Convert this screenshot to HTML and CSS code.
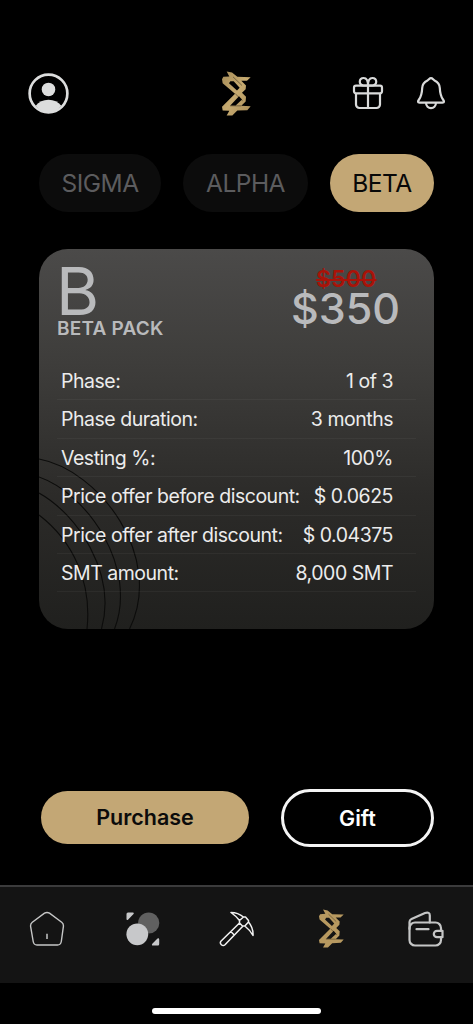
FILE: index.html
```html
<!DOCTYPE html>
<html lang="en">
<head>
<meta charset="utf-8">
<title>Beta Pack</title>
<link rel="stylesheet" href="styles.css">
</head>
<body>
<svg width="0" height="0" class="defs">
  <defs>
    <linearGradient id="gold" x1="0" y1="0" x2="1" y2="1"><stop offset="0" stop-color="#a58b57"/><stop offset=".5" stop-color="#c6aa70"/><stop offset="1" stop-color="#a88c57"/></linearGradient>
    <symbol id="logo" viewBox="66 33 87 134">
      <path fill-rule="evenodd" d="M80 34L96 37 112 50 152 51 141 62 124 62 138 76 137 87 126 98 138 110 137 124 124 137 152 138 142 150 112 151 97 166 80 166 88 152 68 151 66 140 105 101 68 69 66 57 70 50 88 49ZM91 63L87 69 111 91 119 83 101 63ZM117 108L91 136 107 136 126 118Z"/>
      <path class="logo-seam" d="M99 50L126 76M106 101L128 122M90 137H124"/>
    </symbol>
  </defs>
</svg>
<div class="app">
  <header class="header">
    <svg class="avatar" viewBox="0 0 40 40"><circle cx="20" cy="20" r="18.4" fill="none" stroke="#dcdddd" stroke-width="2.6"/><circle cx="20" cy="16" r="6.6" fill="#dcdddd"/><path fill="#dcdddd" d="M7.5 32Q12 26 20 26T32.500 32Q27 38.500 20 38.500T7.500 32Z"/></svg>
    <svg class="brand" fill="url(#gold)"><use href="#logo"/></svg>
    <svg class="gift-icon" viewBox="0 0 32 34"><g class="line"><rect x="2" y="9.700" width="28" height="7.600" rx="2"/><path d="M4 17.300V28.500a3.500 3.500 0 0 0 3.500 3.500H24.500a3.500 3.500 0 0 0 3.500-3.500V17.300M16 9.700V32M16 9.500H11.500C6.500 9.500 6.500 2 11.700 2 14.500 2 16 4.200 16 9.500ZM16 9.500H20.500C25.500 9.500 25.500 2 20.300 2 17.500 2 16 4.200 16 9.500Z"/></g></svg>
    <svg class="bell-icon" viewBox="0 0 30 34"><g class="line"><path d="M15 2.200C13.300 2.200 13 3.700 11.500 4.400 8 6 6.300 8.500 6.200 12C6 17 5.500 20 3 23.500 1.500 25.600 1.700 26.600 3.500 26.600H26.500C28.300 26.600 28.500 25.600 27 23.500 24.500 20 24 17 23.800 12 23.700 8.500 22 6 18.500 4.400 17 3.700 16.700 2.200 15 2.200ZM10 26.600C10 34 20 34 20 26.600"/></g></svg>
  </header>
  <nav class="tabs">
    <span class="tab sigma">SIGMA</span><span class="tab alpha">ALPHA</span><span class="tab active">BETA</span>
  </nav>
  <main class="card">
    <svg class="rings" viewBox="0 0 102 172"><path d="M0 2C60 13 126 100 90.500 172M0 20C49 37 99 111 75.500 172M0 36C38 57 78 116 62.500 172M0 58C34 84 53 125 48 172"/></svg>
    <div class="card-head">
      <div class="pack"><span class="letter">B</span><span class="name">BETA PACK</span></div>
      <div class="price"><span class="old">$500</span><span class="new">$350</span></div>
    </div>
    <div class="rows">
      <div class="row"><span>Phase:</span><span>1 of 3</span></div>
      <div class="row"><span>Phase duration:</span><span>3 months</span></div>
      <div class="row"><span>Vesting %:</span><span>100%</span></div>
      <div class="row"><span>Price offer before discount:</span><span>$ 0.0625</span></div>
      <div class="row"><span>Price offer after discount:</span><span>$ 0.04375</span></div>
      <div class="row"><span>SMT amount:</span><span>8,000 SMT</span></div>
    </div>
  </main>
  <div class="actions"><button class="purchase">Purchase</button><button class="gift">Gift</button></div>
  <footer class="bottom">
    <svg class="home" viewBox="0 0 36 36"><path fill="none" stroke="#c5c6c6" stroke-width="1.400" d="M15.500 2.200Q18 .8 20.500 2.200L32.700 11.300Q34.700 12.900 34.400 15.300L32.300 30.500Q31.700 34 28.500 34H8Q4.800 34 4.200 30.500L1.600 15.300Q1.300 12.900 3.300 11.300Z"/><path stroke="#c5c6c6" stroke-width="1.500" d="M18 22.800V28"/></svg>
    <svg class="circles" viewBox="0 0 34 34"><circle cx="22.700" cy="11" r="10.600" fill="#606060"/><circle cx="11.300" cy="22.300" r="10.900" fill="#c7c8ca"/><path fill="#c7c8ca" d="M2 .5H7Q8.500.5 7.500 2L2 7.700Q.5 8.500.5 7V2Q.5.5 2 .5ZM32 33.500H27Q25 33.500 26.500 31.500L31.500 26.500Q33.200 25.500 33.200 27.500V32Q33.200 33.500 32 33.500Z"/></svg>
    <svg class="pick" viewBox="0 0 36 36"><g fill="none" stroke="#f2f2f2" stroke-width="1.500" stroke-linejoin="round"><path d="M12 1.500Q19 1.500 24.500 6L20.500 9.500Q17 5 12 1.500ZM29.500 11Q34.500 17 34 24.500Q31 19 25.800 15ZM24.500 6L26.500 6 29.500 9.500 29.500 11 25.800 15H23.500L20.500 12V9.500ZM20.500 12L1.900 30.300C.2 32.500 3.500 36 6 33.800L23.800 15.200M12 20.800L15.300 24"/></g></svg>
    <svg class="brand-small"><use href="#logo"/></svg>
    <svg class="wallet" viewBox="0 0 36 36"><g fill="none" stroke="#c5c6c6" stroke-width="2.200" stroke-linejoin="round" stroke-linecap="round"><rect x="1.500" y="11.500" width="31.500" height="23" rx="5.500"/><path d="M1.500 18V11Q1.500 9 3.500 8L17 2Q21.800.5 21.800 4.500V11.500M8.500 18.200H20.500"/><path fill="#141414" d="M34.500 19.800H29A3.200 3.200 0 0 0 29 26.200H34.500Z"/></g></svg>
  </footer>
  <div class="home-area"><div class="indicator"></div></div>
</div>
</body>
</html>
```
FILE: styles.css
```css
* { box-sizing: border-box; }
body { margin: 0; background: #000; font-family: Inter, "Liberation Sans", sans-serif; }
svg { display: block; flex: none; }
.defs { position: absolute; }
.app { width: 473px; height: 1024px; display: flex; flex-direction: column; overflow: hidden; }
.header { height: 154px; padding: 71px 28px 0 28px; display: flex; align-items: flex-start; }
.avatar { width: 41px; height: 41px; margin-top: 2px; }
.brand { width: 29px; height: 45px; margin-left: 153px; }
.logo-seam { stroke: #14110b; stroke-width: 2; fill: none; opacity: .65; }
.gift-icon { width: 32px; height: 34px; margin: 5px 0 0 100.500px; }
.bell-icon { width: 30px; height: 34px; margin: 5px 0 0 32px; }
.line { fill: none; stroke: #d9dada; stroke-width: 2.2; stroke-linejoin: round; }
.tabs { display: flex; gap: 22px; padding-left: 39px; height: 58px; }
.tab { height: 58px; border-radius: 29px; background: #0c0c0c; color: #5c5c5e; font-size: 24.500px; line-height: 58px; text-align: center; letter-spacing: -.5px; }
.sigma { width: 122px; }
.alpha { width: 125px; }
.active { width: 104px; background: #c3a775; color: #080808; }
.card { position: relative; width: 395px; height: 380px; margin: 37px 0 0 39px; border-radius: 29px; overflow: hidden; background: linear-gradient(#4b4a49, #3e3d3b 30%, #2c2b29 65%, #20201e); }
.rings { position: absolute; left: 0; bottom: 0; width: 102px; height: 172px; fill: none; stroke: #0c0c0b; stroke-width: 1.100; }
.card-head { position: relative; height: 113px; display: flex; justify-content: space-between; padding: 0 34px 0 18px; color: #b9babc; }
.pack, .price { display: flex; flex-direction: column; }
.letter { font-size: 66px; line-height: 50px; font-weight: 400; margin-top: 17px; height: 52px; margin-left: -1px; }
.name { font-size: 19px; line-height: 22px; font-weight: 600; letter-spacing: .2px; }
.old { color: #a91309; font-size: 23px; line-height: 20px; font-weight: 600; text-decoration: line-through; margin-top: 20px; padding-left: 25px; letter-spacing: .2px; }
.new { font-size: 43px; line-height: 36px; font-weight: 500; margin-top: 1px; }
.rows { position: relative; padding: 0 18px; }
.row { height: 38.400px; padding: 0 23px 0 4px; border-bottom: 1px solid rgba(255,255,255,.045); display: flex; justify-content: space-between; color: #ececec; font-size: 19.500px; line-height: 39px; white-space: nowrap; letter-spacing: -.48px; }
.actions { margin: 160px 0 0 41px; display: flex; align-items: center; gap: 32px; height: 58px; }
.actions button { font: 600 21.500px/24px Inter, sans-serif; padding: 0 0 1px; }
.purchase { width: 208px; height: 53px; margin-bottom: 1px; border: 0; border-radius: 27px; background: #c3a775; color: #0b0b0b; }
.gift { width: 153px; height: 58px; border: 3px solid #f4f4f4; border-radius: 29px; background: #000; color: #fff; }
.bottom { margin-top: 38px; height: 98px; flex: none; background: #141414; border-top: 2px solid #3b3b3c; display: flex; align-items: flex-start; padding: 24px 0 0 29px; }
.home { width: 36px; height: 36px; }
.circles { width: 34px; height: 34px; margin: 1px 0 0 61px; }
.pick { width: 36px; height: 36px; margin-left: 59px; }
.brand-small { width: 25px; height: 39px; margin: -2px 0 0 64px; fill: #b79960; }
.wallet { width: 36px; height: 36px; margin-left: 64px; }
.home-area { padding-top: 25px; display: flex; justify-content: center; }
.indicator { width: 169px; height: 6px; border-radius: 3px; background: #fff; }
```
